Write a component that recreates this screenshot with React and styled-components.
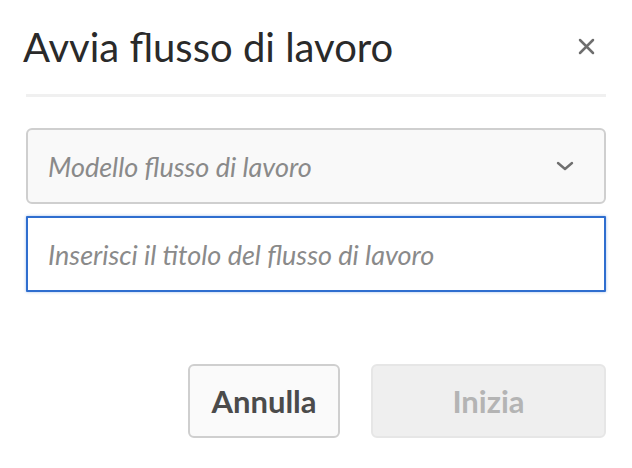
import React from "react";
import styled, { createGlobalStyle } from "styled-components";

const Global = createGlobalStyle`
  html, body { margin: 0; padding: 0; background: #ffffff; }
  body { font-family: Lato, "Open Sans", sans-serif; }
  * { box-sizing: border-box; }
`;

const Dialog = styled.div`
  width: 632px;
  height: 468px;
  padding: 0 26px;
  display: flex;
  flex-direction: column;
`;

const Header = styled.div`
  height: 94px;
  display: flex;
  align-items: center;
  justify-content: space-between;
  padding-top: 0;
`;

const Title = styled.h1`
  margin: 0 0 0 -3px;
  font-family: Lato, sans-serif;
  font-weight: 400;
  font-size: 40px;
  line-height: 48px;
  color: #2a2a2a;
`;

const CloseButton = styled.button`
  width: 24px;
  height: 24px;
  padding: 0;
  margin-right: 8px;
  margin-top: -1px;
  border: 0;
  background: transparent;
  display: flex;
  align-items: center;
  justify-content: center;
`;

const Divider = styled.div`
  height: 3px;
  background: #f0f0f0;
`;

const Body = styled.div`
  display: flex;
  flex-direction: column;
  gap: 12px;
  margin-top: 31px;
`;

const Select = styled.div`
  height: 76px;
  border: 2px solid #cfcfcf;
  border-radius: 6px;
  background: #f9f9f9;
  display: flex;
  align-items: center;
  justify-content: space-between;
  padding: 0 30px 0 20px;
`;

const Placeholder = styled.span`
  font-family: Lato, sans-serif;
  font-style: italic;
  font-size: 27px;
  color: #8a8a8a;
`;

const TextInput = styled.input`
  height: 76px;
  border: 2px solid #2f6ecf;
  border-radius: 1px;
  box-shadow: 0 0 3px rgba(47, 110, 207, 0.45);
  padding: 0 20px;
  font-family: Lato, sans-serif;
  font-style: italic;
  font-size: 27px;
  outline: none;
  background: #fff;
  &::placeholder { color: #8a8a8a; }
`;

const Footer = styled.div`
  margin-top: 72px;
  display: flex;
  justify-content: flex-end;
  gap: 31px;
`;

const Button = styled.button`
  width: ${(p) => p.$w}px;
  height: 74px;
  border-radius: 6px;
  border: 2px solid ${(p) => (p.$disabled ? "#e6e6e6" : "#cfcfcf")};
  background: ${(p) => (p.$disabled ? "#efefef" : "#fafafa")};
  color: ${(p) => (p.$disabled ? "#b4b4b4" : "#4b4b4b")};
  font-family: Lato, sans-serif;
  font-weight: 700;
  font-size: 31px;
  padding: 0;
`;

export default function App() {
  return (
    <>
      <Global />
      <Dialog>
        <Header>
          <Title>Avvia flusso di lavoro</Title>
          <CloseButton aria-label="Chiudi">
            <svg width="17" height="17" viewBox="0 0 17 17">
              <path d="M2 2 L15 15 M15 2 L2 15" stroke="#6e6e6e" strokeWidth="2.5" strokeLinecap="round" />
            </svg>
          </CloseButton>
        </Header>
        <Divider />
        <Body>
          <Select>
            <Placeholder>Modello flusso di lavoro</Placeholder>
            <svg width="18" height="10" viewBox="0 0 18 10">
              <path d="M2 2 L9 8 L16 2" stroke="#707070" strokeWidth="2.4" fill="none" strokeLinecap="round" strokeLinejoin="round" />
            </svg>
          </Select>
          <TextInput placeholder="Inserisci il titolo del flusso di lavoro" />
        </Body>
        <Footer>
          <Button $w={152}>Annulla</Button>
          <Button $w={235} $disabled disabled>Inizia</Button>
        </Footer>
      </Dialog>
    </>
  );
}
